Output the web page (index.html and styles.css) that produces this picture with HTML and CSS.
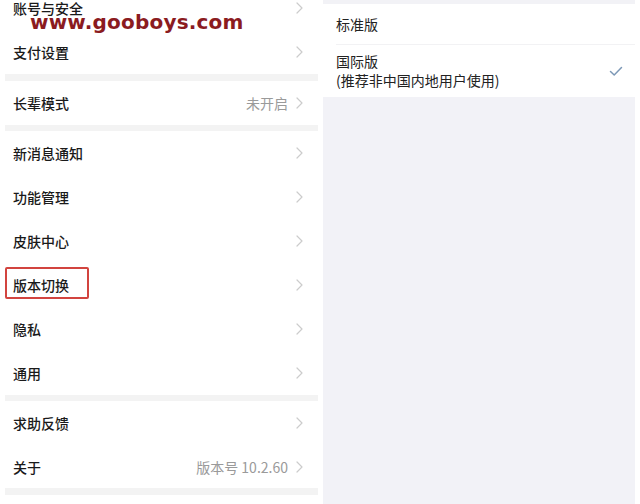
FILE: index.html
```html
<!DOCTYPE html>
<html lang="zh-CN">
<head>
  <meta charset="UTF-8">
  <meta name="viewport" content="width=device-width, initial-scale=1.0">
  <title>设置</title>
  <link rel="stylesheet" href="styles.css">
</head>
<body>
  <div class="screen">
    <!-- Settings list -->
    <div class="settings">
      <div class="row"><span class="label">账号与安全</span><span class="chev"></span></div>
      <div class="row"><span class="label">支付设置</span><span class="chev"></span></div>
      <div class="gap"></div>
      <div class="row"><span class="label">长辈模式</span><span class="value">未开启</span><span class="chev"></span></div>
      <div class="gap sm"></div>
      <div class="row"><span class="label">新消息通知</span><span class="chev"></span></div>
      <div class="row"><span class="label">功能管理</span><span class="chev"></span></div>
      <div class="row"><span class="label">皮肤中心</span><span class="chev"></span></div>
      <div class="row"><span class="label"><span class="marked">版本切换</span></span><span class="chev"></span></div>
      <div class="row"><span class="label">隐私</span><span class="chev"></span></div>
      <div class="row"><span class="label">通用</span><span class="chev"></span></div>
      <div class="gap sm"></div>
      <div class="row"><span class="label">求助反馈</span><span class="chev"></span></div>
      <div class="row last"><span class="label">关于</span><span class="value">版本号 10.2.60</span><span class="chev"></span></div>
      <div class="gap"></div>
    </div>

    <!-- Version switch panel -->
    <div class="version-panel">
      <div class="top-band"></div>
      <div class="option first">标准版</div>
      <div class="option">
        <div class="option-text">国际版<br>(推荐非中国内地用户使用)</div>
        <svg class="check" width="14" height="11" viewBox="0 0 14 11">
          <path d="M1.5 5.5 L5.2 9 L12.5 1.5" fill="none" stroke="#7c98b6" stroke-width="1.5" stroke-linecap="round" stroke-linejoin="round"/>
        </svg>
      </div>
      <div class="rest"></div>
    </div>

    <div class="watermark">www.gooboys.com</div>
  </div>

  <script>
    // draw the same chevron in every row
    const chevron = '<svg width="7" height="12" viewBox="0 0 7 12"><path d="M1 1 L6 6 L1 11" fill="none" stroke="#cccccc" stroke-width="1.2" stroke-linecap="round" stroke-linejoin="round"/></svg>';
    document.querySelectorAll(".chev").forEach(el => {
      el.innerHTML = chevron;
    });
  </script>
</body>
</html>
```

FILE: styles.css
```css
body {
  margin: 0;
  background: #ffffff;
  font-family: "Noto Sans CJK SC", "Noto Sans", sans-serif;
  color: #1a1a1a;
}
.screen {
  position: relative;
  display: flex;
  gap: 5px;
  padding-left: 5px;
  height: 504px;
  overflow: hidden;
}
.settings {
  width: 313px;
  margin-top: -14px;
}
.row {
  height: 44px;
  display: flex;
  align-items: center;
  padding: 0 15px 0 8px;
  font-size: 14px;
  line-height: 20px;
  font-weight: 500;
}
.row.last {
  height: 43px;
}
.label {
  flex: 1;
}
.value {
  color: #9a9a9a;
  font-weight: 400;
  margin-right: 8px;
}
.chev {
  display: flex;
  align-items: center;
}
.gap {
  height: 7px;
  background: #f3f3f3;
}
.gap.sm {
  height: 6px;
}
.marked {
  position: relative;
}
.marked::after {
  content: "";
  position: absolute;
  left: -8px;
  top: -8px;
  width: 80px;
  height: 28px;
  border: 2.5px solid #d2443f;
  border-radius: 2px;
}
.version-panel {
  width: 312px;
  display: flex;
  flex-direction: column;
}
.top-band {
  height: 4px;
  background: #f2f2f6;
}
.option {
  display: flex;
  align-items: center;
  margin-left: 13px;
  padding-right: 12px;
  font-size: 14px;
  line-height: 19px;
  color: #222;
}
.option.first {
  height: 40px;
  border-bottom: 1px solid #f2f2f4;
}
.option-text {
  flex: 1;
  padding: 7px 0 7px;
}
.rest {
  flex: 1;
  background: #f2f2f7;
}
.watermark {
  position: absolute;
  left: 30px;
  top: 10px;
  font-family: "DejaVu Sans", sans-serif;
  font-weight: bold;
  font-size: 20px;
  letter-spacing: 0.2px;
  color: #8b1b1f;
}
```
